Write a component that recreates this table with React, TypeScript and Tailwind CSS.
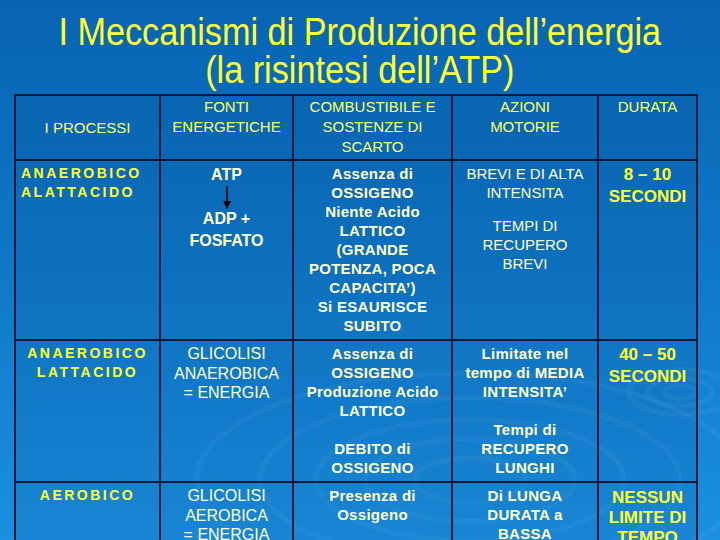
import React from "react";

const font = { fontFamily: '"Liberation Sans", Arial, sans-serif' };

function Ripples() {
  // faint water-drop rings in the slide background
  const big = [40, 75, 110, 150, 195];
  const small = [10, 20, 32];
  return (
    <svg
      className="pointer-events-none absolute inset-0"
      width="720"
      height="540"
      viewBox="0 0 720 540"
    >
      <g fill="none" stroke="#ffffff" strokeOpacity="0.045" strokeWidth="5">
        {big.map((r) => (
          <ellipse key={r} cx="470" cy="480" rx={r * 1.4} ry={r * 0.55} />
        ))}
        {small.map((r) => (
          <ellipse key={r} cx="680" cy="392" rx={r * 1.6} ry={r * 0.7} />
        ))}
      </g>
    </svg>
  );
}

function Arrow() {
  return (
    <svg width="12" height="24" viewBox="0 0 12 24" className="mx-auto block">
      <line x1="6" y1="0" x2="6" y2="17" stroke="#000" strokeWidth="1.6" />
      <path d="M2 15 L6 23 L10 15 Z" fill="#000" />
    </svg>
  );
}

const th = "border-2 border-[#0a1838] bg-[#00306a]/10 px-1 pt-[1px] text-center align-top text-[15px] font-normal leading-[20px] text-[#ffff66]";
const td = "border-2 border-[#0a1838] bg-[#00306a]/10 px-1 pt-[3px] text-center align-top";
const proc = "text-[14px] font-bold leading-[19px] tracking-[2.5px] text-[#ffff33]";
const body = "text-[15px] font-bold leading-[19px] tracking-[0.3px] text-[#ffffcc]";
const plain = "text-[16px] leading-[19.5px] text-[#ffffcc]";
const dur = "text-[17px] font-bold leading-[22px] text-[#ffff33]";

export default function App() {
  return (
    <div
      className="relative h-[540px] w-[720px] overflow-hidden bg-gradient-to-b from-[#0864b2] via-[#0f78c8] to-[#1b90e0]"
      style={font}
    >
      <Ripples />
      <div className="relative flex flex-col items-center pt-[13px]">
        <h1 className="scale-x-90 whitespace-nowrap text-center text-[38px] font-normal leading-[38px] text-[#ffff33]">
          I Meccanismi di Produzione dell’energia
          <br />
          (la risintesi dell’ATP)
        </h1>
      </div>
      <table className="relative ml-[14px] mt-[5px] w-[682px] table-fixed border-collapse">
        <colgroup>
          <col className="w-[145px]" />
          <col className="w-[133px]" />
          <col className="w-[159px]" />
          <col className="w-[146px]" />
          <col className="w-[99px]" />
        </colgroup>
        <thead>
          <tr className="h-[65px]">
            <th className={th + " !align-middle"}>I PROCESSI</th>
            <th className={th}>
              FONTI
              <br />
              ENERGETICHE
            </th>
            <th className={th}>
              COMBUSTIBILE E
              <br />
              SOSTENZE DI
              <br />
              SCARTO
            </th>
            <th className={th}>
              AZIONI
              <br />
              MOTORIE
            </th>
            <th className={th}>DURATA</th>
          </tr>
        </thead>
        <tbody>
          <tr className="h-[180px]">
            <td className={td + " !text-left !pl-[5px]"}>
              <div className={proc}>
                ANAEROBICO
                <br />
                ALATTACIDO
              </div>
            </td>
            <td className={td}>
              <div className="text-[16px] font-bold leading-[22px] text-[#ffffcc]">ATP</div>
              <Arrow />
              <div className="mt-[-2px] text-[16px] font-bold leading-[22px] text-[#ffffcc]">
                ADP +
                <br />
                FOSFATO
              </div>
            </td>
            <td className={td}>
              <div className={body}>
                Assenza di
                <br />
                OSSIGENO
                <br />
                Niente Acido
                <br />
                LATTICO
                <br />
                (GRANDE
                <br />
                POTENZA, POCA
                <br />
                CAPACITA’)
                <br />
                Si ESAURISCE
                <br />
                SUBITO
              </div>
            </td>
            <td className={td}>
              <div className="text-[15px] leading-[19px] text-[#ffffcc]">
                BREVI E DI ALTA
                <br />
                INTENSITA
              </div>
              <div className="mt-[14px] text-[15px] leading-[19px] text-[#ffffcc]">
                TEMPI DI
                <br />
                RECUPERO
                <br />
                BREVI
              </div>
            </td>
            <td className={td}>
              <div className={dur}>
                8 – 10
                <br />
                SECONDI
              </div>
            </td>
          </tr>
          <tr className="h-[142px]">
            <td className={td}>
              <div className={proc}>
                ANAEROBICO
                <br />
                LATTACIDO
              </div>
            </td>
            <td className={td}>
              <div className={plain}>
                GLICOLISI
                <br />
                ANAEROBICA
                <br />= ENERGIA
              </div>
            </td>
            <td className={td}>
              <div className={body}>
                Assenza di
                <br />
                OSSIGENO
                <br />
                Produzione Acido
                <br />
                LATTICO
                <br />
                <br />
                DEBITO di
                <br />
                OSSIGENO
              </div>
            </td>
            <td className={td}>
              <div className={body}>
                Limitate nel
                <br />
                tempo di MEDIA
                <br />
                INTENSITA’
                <br />
                <br />
                Tempi di
                <br />
                RECUPERO
                <br />
                LUNGHI
              </div>
            </td>
            <td className={td}>
              <div className={dur}>
                40 – 50
                <br />
                SECONDI
              </div>
            </td>
          </tr>
          <tr className="h-[120px]">
            <td className={td}>
              <div className={proc}>AEROBICO</div>
            </td>
            <td className={td}>
              <div className={plain}>
                GLICOLISI
                <br />
                AEROBICA
                <br />= ENERGIA
              </div>
            </td>
            <td className={td}>
              <div className={body}>
                Presenza di
                <br />
                Ossigeno
                <br />
                <br />
                Minimo
                <br />
                ACIDO LATTICO
              </div>
            </td>
            <td className={td}>
              <div className={body}>
                Di LUNGA
                <br />
                DURATA a
                <br />
                BASSA
                <br />
                INTENSITA’
              </div>
            </td>
            <td className={td}>
              <div className="pt-[2px] text-[17px] font-bold leading-[20px] text-[#ffff33]">
                NESSUN
                <br />
                LIMITE DI
                <br />
                TEMPO
              </div>
            </td>
          </tr>
        </tbody>
      </table>
    </div>
  );
}
